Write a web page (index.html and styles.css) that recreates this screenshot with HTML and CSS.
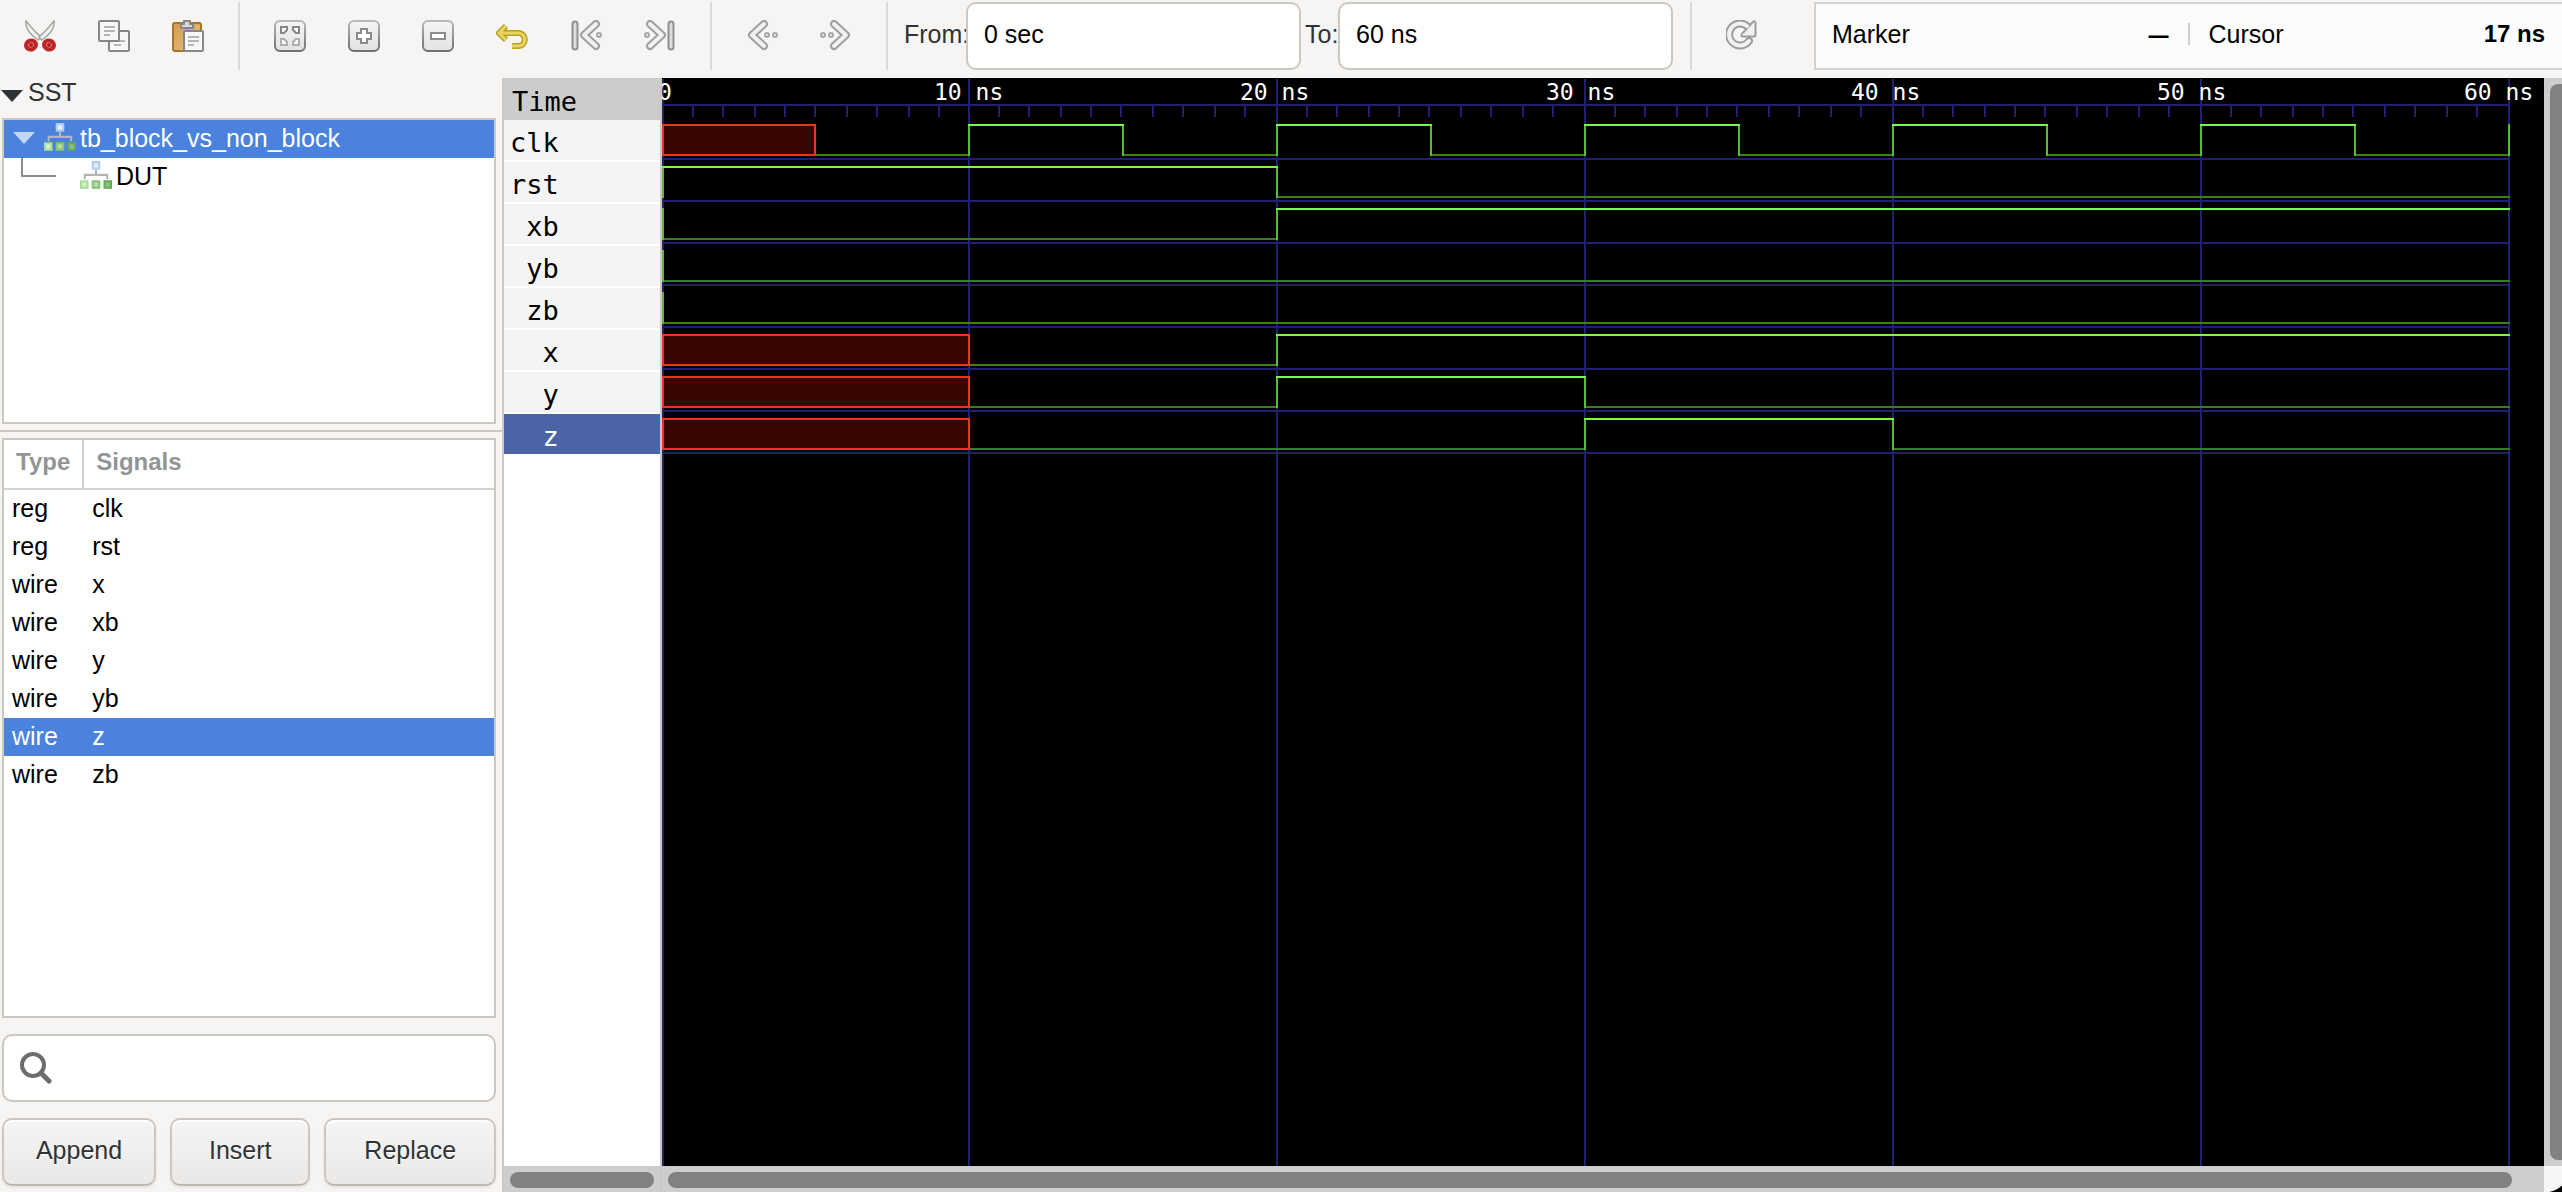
FILE: index.html
```html
<!DOCTYPE html>
<html lang="en">
<head>
<meta charset="utf-8">
<title>Waveform viewer</title>
<link rel="stylesheet" href="styles.css">
</head>
<body>
<svg class="defs" width="0" height="0" aria-hidden="true">
  <defs>
    <linearGradient id="plate" x1="0" y1="0" x2="0" y2="1">
      <stop offset="0" stop-color="#f4f5f4"/><stop offset="1" stop-color="#e2e3e1"/>
    </linearGradient>
    <linearGradient id="plate-edge" x1="0" y1="0" x2="0" y2="1">
      <stop offset="0" stop-color="#b4bab5"/><stop offset="1" stop-color="#6f7270"/>
    </linearGradient>
    <linearGradient id="board" x1="0" y1="0" x2="1" y2="1">
      <stop offset="0" stop-color="#d29d4c"/><stop offset="1" stop-color="#e6c184"/>
    </linearGradient>
    <symbol id="module" viewBox="0 0 30 28">
      <path d="M15 8v5M4.500 17v-4h21v4" fill="none" stroke="#b5b5b5" stroke-width="2"/>
      <rect x="12" y="1" width="6" height="6" fill="#e3eefc" stroke="#b0cdf2" stroke-width="2"/>
      <rect x="1" y="19" width="6" height="6" fill="#d3f0c8" stroke="#abdc9c" stroke-width="2"/>
      <rect x="12" y="19" width="6" height="6" fill="#b4deA6" stroke="#88c476" stroke-width="2"/>
      <rect x="23" y="19" width="6" height="6" fill="#8cc47b" stroke="#68a957" stroke-width="2"/>
    </symbol>
    <path id="chevron" d="M26 4 14 15l12 11"/>
  </defs>
</svg>

<header class="toolbar">
  <div class="group">
    <button class="tool" type="button" aria-label="Cut">
      <svg width="32" height="32" viewBox="0 0 32 32">
        <path d="M2 1c-1 6 2 12 12 19l3-3C11 12 6 6 2 1z" fill="#f4f5f3" stroke="#a2a6a1" stroke-width="1.500"/>
        <path d="M30 1c1 6-2 12-12 19l-3-3C21 12 26 6 30 1z" fill="#f4f5f3" stroke="#a2a6a1" stroke-width="1.500"/>
        <ellipse cx="7" cy="25" rx="5" ry="4.500" transform="rotate(-25 7 25)" fill="#d98080" stroke="#bd2626" stroke-width="4"/>
        <ellipse cx="25" cy="25" rx="5" ry="4.500" transform="rotate(25 25 25)" fill="#d98080" stroke="#bd2626" stroke-width="4"/>
        <circle cx="7" cy="25" r="2" fill="#b52020"/><circle cx="25" cy="25" r="2" fill="#b52020"/>
      </svg>
    </button>
    <button class="tool" type="button" aria-label="Copy">
      <svg width="32" height="32" viewBox="0 0 32 32">
        <rect x="11" y="11" width="20" height="20" rx="1" fill="#f7f7f6" stroke="#848885" stroke-width="2"/>
        <path d="M16 21h11M16 25h7" stroke="#b4b6b4" stroke-width="2"/>
        <rect x="1" y="1" width="20" height="20" rx="1" fill="#f7f7f6" stroke="#848885" stroke-width="2"/>
        <path d="M6 7h11M6 11h11M6 15h6" stroke="#b4b6b4" stroke-width="2"/>
      </svg>
    </button>
    <button class="tool" type="button" aria-label="Paste">
      <svg width="32" height="32" viewBox="0 0 32 32">
        <rect x="1" y="3" width="28" height="28" rx="2" fill="url(#board)" stroke="#aa7325" stroke-width="2"/>
        <path d="M12 1h6v3h3v4H9V4h3z" fill="#d8dad7" stroke="#858985" stroke-width="2" stroke-linejoin="round"/>
        <rect x="12" y="11" width="19" height="20" rx="1" fill="#f7f7f6" stroke="#848885" stroke-width="2"/>
        <path d="M16 17h11M16 21h11M16 25h6" stroke="#b4b6b4" stroke-width="2"/>
      </svg>
    </button>
  </div>
  <div class="group">
    <button class="tool" type="button" aria-label="Zoom fit">
      <svg width="32" height="32" viewBox="0 0 32 32">
        <rect x="1" y="1" width="30" height="30" rx="5" fill="url(#plate)" stroke="url(#plate-edge)" stroke-width="2"/>
        <g fill="#fff" stroke="#858785" stroke-width="2">
          <path d="M7 7h6v3l-3 3H7z"/><path d="M25 7h-6v3l3 3h3z"/>
          <path stroke="#adafad" d="M7 25h6v-3l-3-3H7z"/><path stroke="#adafad" d="M25 25h-6v-3l3-3h3z"/>
        </g>
      </svg>
    </button>
    <button class="tool" type="button" aria-label="Zoom in">
      <svg width="32" height="32" viewBox="0 0 32 32">
        <rect x="1" y="1" width="30" height="30" rx="5" fill="url(#plate)" stroke="url(#plate-edge)" stroke-width="2"/>
        <path d="M13 9h6v4h4v6h-4v4h-6v-4H9v-6h4z" fill="#fff" stroke="#8b8d8b" stroke-width="2"/>
      </svg>
    </button>
    <button class="tool" type="button" aria-label="Zoom out">
      <svg width="32" height="32" viewBox="0 0 32 32">
        <rect x="1" y="1" width="30" height="30" rx="5" fill="url(#plate)" stroke="url(#plate-edge)" stroke-width="2"/>
        <rect x="9" y="13" width="14" height="6" fill="#fff" stroke="#8b8d8b" stroke-width="2"/>
      </svg>
    </button>
    <button class="tool" type="button" aria-label="Undo zoom">
      <svg width="32" height="32" viewBox="0 0 32 32" fill="none" stroke-linejoin="round">
        <path d="M10 6 3 13l7 7M4 13h18c9 0 9 13 0 13h-6" stroke="#b99f22" stroke-width="6"/>
        <path d="M10 6 3 13l7 7M4 13h18c9 0 9 13 0 13h-6" stroke="#e8d661" stroke-width="3"/>
      </svg>
    </button>
    <button class="tool" type="button" aria-label="Zoom to start">
      <svg width="32" height="32" viewBox="0 0 32 32" fill="none" stroke-linecap="round" stroke-linejoin="round">
        <g stroke="#9fa19f" stroke-width="8"><use href="#chevron"/></g>
        <path d="M5 4v23" stroke="#8f918f" stroke-width="7"/>
        <g stroke="#f1f1f0" stroke-width="4"><use href="#chevron"/></g>
        <path d="M5 4v23" stroke="#dcdddc" stroke-width="3"/>
        <circle cx="29" cy="15" r="2" stroke="#a6a8a6" stroke-width="2"/>
      </svg>
    </button>
    <button class="tool" type="button" aria-label="Zoom to end">
      <svg width="32" height="32" viewBox="0 0 32 32" fill="none" stroke-linecap="round" stroke-linejoin="round">
        <g transform="matrix(-1 0 0 1 32 0)">
          <g stroke="#9fa19f" stroke-width="8"><use href="#chevron"/></g>
          <path d="M5 4v23" stroke="#8f918f" stroke-width="7"/>
          <g stroke="#f1f1f0" stroke-width="4"><use href="#chevron"/></g>
          <path d="M5 4v23" stroke="#dcdddc" stroke-width="3"/>
          <circle cx="29" cy="15" r="2" stroke="#a6a8a6" stroke-width="2"/>
        </g>
      </svg>
    </button>
  </div>
  <div class="group">
    <button class="tool" type="button" aria-label="Previous edge">
      <svg width="32" height="32" viewBox="0 0 32 32" fill="none" stroke-linecap="round" stroke-linejoin="round">
        <use href="#chevron" x="-8" stroke="#9fa19f" stroke-width="8"/>
        <use href="#chevron" x="-8" stroke="#f1f1f0" stroke-width="4"/>
        <g stroke="#a6a8a6" stroke-width="2"><circle cx="21" cy="15" r="2"/><circle cx="29" cy="15" r="2"/></g>
      </svg>
    </button>
    <button class="tool" type="button" aria-label="Next edge">
      <svg width="32" height="32" viewBox="0 0 32 32" fill="none" stroke-linecap="round" stroke-linejoin="round">
        <g transform="matrix(-1 0 0 1 32 0)">
          <use href="#chevron" x="-8" stroke="#9fa19f" stroke-width="8"/>
          <use href="#chevron" x="-8" stroke="#f1f1f0" stroke-width="4"/>
          <g stroke="#a6a8a6" stroke-width="2"><circle cx="21" cy="15" r="2"/><circle cx="29" cy="15" r="2"/></g>
        </g>
      </svg>
    </button>
  </div>
  <div class="group range">
    <label for="from">From:</label>
    <input class="entry" id="from" type="text" value="0 sec">
    <label class="to" for="to">To:</label>
    <input class="entry" id="to" type="text" value="60 ns">
  </div>
  <div class="group">
    <button class="tool" type="button" aria-label="Reload">
      <svg width="32" height="32" viewBox="0 0 32 32" fill="none" stroke-linecap="round" stroke-linejoin="round">
        <path d="M23 21A11 11 0 1 1 21 6" stroke="#9b9d9b" stroke-width="8"/>
        <path d="M28 3v12H17z" fill="#f1f1f0" stroke="#9b9d9b" stroke-width="5"/>
        <path d="M23 21A11 11 0 1 1 21 6" stroke="#f1f1f0" stroke-width="4"/>
        <path d="M28 3v12H17z" fill="#f1f1f0" stroke="#f1f1f0"/>
      </svg>
    </button>
  </div>
  <div class="readout">
    <div class="field"><span>Marker</span><span class="dash">–</span></div>
    <span class="bar"></span>
    <div class="field"><span>Cursor</span><strong>17 ns</strong></div>
  </div>
</header>

<main class="work">
  <aside class="side">
    <h2 class="expander">
      <svg width="24" height="14" viewBox="0 0 24 14"><path d="M1 1h22L12 13z" fill="#2e3436"/></svg>SST
    </h2>
    <ul class="tree">
      <li class="node selected">
        <svg width="24" height="14" viewBox="0 0 24 14"><path d="M1 1h22L12 13z" fill="#c3d7f5"/></svg>
        <svg class="module" width="32" height="30"><use href="#module"/></svg>tb_block_vs_non_block
      </li>
      <li class="node child">
        <svg class="branch" width="36" height="38"><path d="M1 1v18h34" fill="none" stroke="#8e8e8e" stroke-width="2"/></svg>
        <svg class="module" width="32" height="30"><use href="#module"/></svg>DUT
      </li>
    </ul>
    <div class="sash"></div>
    <div class="signals">
      <table>
        <thead><tr><th class="type" scope="col">Type</th><th scope="col">Signals</th></tr></thead>
        <tbody>
          <tr><td>reg</td><td>clk</td></tr>
          <tr><td>reg</td><td>rst</td></tr>
          <tr><td>wire</td><td>x</td></tr>
          <tr><td>wire</td><td>xb</td></tr>
          <tr><td>wire</td><td>y</td></tr>
          <tr><td>wire</td><td>yb</td></tr>
          <tr class="selected"><td>wire</td><td>z</td></tr>
          <tr><td>wire</td><td>zb</td></tr>
        </tbody>
      </table>
    </div>
    <label class="search">
      <svg width="32" height="32" viewBox="0 0 32 32" fill="none" stroke="#6a6d6b" stroke-width="4"><circle cx="13" cy="13" r="11"/><path d="m21 21 8 8" stroke-width="5" stroke-linecap="round"/></svg>
      <input type="text" aria-label="Filter signals">
    </label>
    <div class="actions">
      <button class="action" type="button">Append</button>
      <button class="action narrow" type="button">Insert</button>
      <button class="action wide" type="button">Replace</button>
    </div>
  </aside>

  <section class="names">
    <h2 class="time">Time</h2>
    <ul class="traces">
      <li>clk</li>
      <li>rst</li>
      <li> xb</li>
      <li> yb</li>
      <li> zb</li>
      <li>  x</li>
      <li>  y</li>
      <li class="current">  z</li>
    </ul>
    <div class="hscroll"><span class="thumb"></span></div>
  </section>

  <section class="waves">
    <svg class="canvas" role="img" aria-label="Waveforms from 0 to 60 ns">
      <defs>
        <path id="ticks" d="M30 28v11M60 28v11M92 28v11M122 28v11M152 28v11M184 28v11M214 28v11M246 28v11M276 28v11"/>
        <path id="row-line" d="M0 81h1848"/>
        <path id="major" d="M0 1v2000"/>
        <path id="clk-high" d="M-1 47h156"/>
        <path id="clk-low" d="M153 77h154"/>
        <path id="clk-edge" d="M0 46v32M154 46v32"/>
        <path id="start-edge" d="M1 88v32"/>
      </defs>
      <g class="grid">
        <path d="M0 27h1847"/>
        <use href="#ticks" x="1"/><use href="#ticks" x="307"/><use href="#ticks" x="615"/>
        <use href="#ticks" x="923"/><use href="#ticks" x="1231"/><use href="#ticks" x="1539"/>
        <use href="#row-line"/><use href="#row-line" y="42"/><use href="#row-line" y="84"/><use href="#row-line" y="126"/>
        <use href="#row-line" y="168"/><use href="#row-line" y="210"/><use href="#row-line" y="252"/><use href="#row-line" y="294"/>
        <use href="#major" x="1"/><use href="#major" x="307"/><use href="#major" x="615"/><use href="#major" x="923"/>
        <use href="#major" x="1231"/><use href="#major" x="1539"/><use href="#major" x="1847"/>
      </g>
      <g class="low">
        <path d="M153 77h154"/>
        <use href="#clk-low" x="308"/><use href="#clk-low" x="616"/><use href="#clk-low" x="924"/><use href="#clk-low" x="1232"/><use href="#clk-low" x="1540"/>
        <path d="M615 119h1233M0 161h615M0 203h1848M0 245h1848M307 287h308M307 329h308M923 329h925M307 371h616M1231 371h617"/>
      </g>
      <g class="edge">
        <use href="#clk-edge" x="307"/><use href="#clk-edge" x="615"/><use href="#clk-edge" x="923"/><use href="#clk-edge" x="1231"/><use href="#clk-edge" x="1539"/>
        <path d="M1847 46v32M615 88v32M615 130v32M615 256v32M615 298v32M923 298v32M923 340v32M1231 340v32"/>
        <use href="#start-edge"/><use href="#start-edge" y="42"/><use href="#start-edge" y="84"/><use href="#start-edge" y="126"/>
      </g>
      <g class="high">
        <use href="#clk-high" x="307"/><use href="#clk-high" x="615"/><use href="#clk-high" x="923"/><use href="#clk-high" x="1231"/><use href="#clk-high" x="1539"/>
        <path d="M0 89h616M614 131h1234M614 257h1234M614 299h310M922 341h310"/>
      </g>
      <g class="unknown">
        <rect x="1" y="47" width="152" height="30"/>
        <rect x="1" y="257" width="306" height="30"/>
        <rect x="1" y="299" width="306" height="30"/>
        <rect x="1" y="341" width="306" height="30"/>
      </g>
      <g class="scale">
        <text x="-4" y="22">0</text>
        <text x="272" y="22">10 ns</text>
        <text x="578" y="22">20 ns</text>
        <text x="884" y="22">30 ns</text>
        <text x="1189" y="22">40 ns</text>
        <text x="1495" y="22">50 ns</text>
        <text x="1802" y="22">60 ns</text>
      </g>
    </svg>
    <div class="hscroll main"><span class="thumb"></span></div>
  </section>

  <div class="vbar">
    <div class="vscroll"><span class="vthumb"></span></div>
    <div class="corner"></div>
  </div>
</main>
</body>
</html>
```

FILE: styles.css
```css
* {
  box-sizing: border-box;
}

body {
  margin: 0;
  height: 100vh;
  display: flex;
  flex-direction: column;
  overflow: hidden;
  background: #f6f5f4;
  color: #000;
  font: 25px/30px "Liberation Sans", Arial, sans-serif;
}

.defs {
  position: absolute;
}

h2,
ul {
  margin: 0;
  padding: 0;
  list-style: none;
  font-weight: normal;
}

svg {
  display: block;
  flex: none;
}

/* Toolbar */

.toolbar {
  display: flex;
  flex: none;
  height: 78px;
  padding: 2px 0 8px 3px;
}

.group {
  display: flex;
  flex: none;
}

.group + .group::before {
  content: "";
  width: 2px;
  margin: 0 13px;
  background: #dcdbd9;
}

.tool {
  display: flex;
  align-items: center;
  justify-content: center;
  width: 74px;
  padding: 0;
  border: 0;
  background: none;
}

.range {
  padding-right: 4px;
}

.range label {
  align-self: center;
  width: 65px;
  padding: 0 0 4px 3px;
  color: #2e3436;
}

.range .to {
  width: 37px;
  padding-left: 4px;
}

.entry {
  width: 335px;
  padding: 0 16px 4px;
  border: 2px solid #cdc7c2;
  border-radius: 10px;
  background: #fff;
  color: #000;
  font: inherit;
}

.readout {
  display: flex;
  flex: 1;
  align-items: center;
  margin-left: 35px;
  padding: 0 17px 4px 16px;
  border: 2px solid #d5d0cc;
  border-right: 0;
  background: #fcfcfc;
}

.field {
  display: flex;
  flex: 1;
  align-items: center;
  justify-content: space-between;
}

.dash {
  font-size: 36px;
}

.bar {
  width: 2px;
  height: 22px;
  margin: 0 19px;
  background: #d0cfcd;
}

strong {
  font-size: 24px;
}

/* Left side: module tree and signal list */

.work {
  display: flex;
  flex: 1;
  min-height: 0;
}

.side {
  display: flex;
  flex: none;
  flex-direction: column;
  width: 504px;
  padding-bottom: 6px;
  border-right: 2px solid #cdc7c2;
}

.expander {
  display: flex;
  align-items: center;
  gap: 4px;
  height: 40px;
  padding-bottom: 12px;
  color: #2e3436;
  font-size: 25px;
}

.expander svg {
  margin-top: 8px;
}

.tree {
  flex: none;
  height: 306px;
  margin: 0 6px 0 2px;
  border: 2px solid #cdc7c2;
  background: #fff;
}

.node {
  display: flex;
  align-items: center;
  height: 38px;
  padding: 0 0 2px 8px;
}

.node .module {
  margin: 0 4px 0 8px;
}

.child {
  padding-left: 17px;
}

.child .module {
  margin-left: 23px;
}

.selected {
  background: #4a82dd;
  color: #fff;
}

.sash {
  flex: none;
  height: 2px;
  margin: 6px 0;
  background: #cdc7c2;
}

.signals {
  flex: 1;
  min-height: 0;
  margin: 0 6px 0 2px;
  border: 2px solid #cdc7c2;
  background: #fff;
}

table {
  width: 100%;
  border-collapse: separate;
  border-spacing: 0;
}

th {
  height: 50px;
  padding: 0 12px 4px;
  border-bottom: 2px solid #d5d0cc;
  color: #929595;
  font-size: 24px;
  text-align: left;
}

.type {
  width: 80px;
  border-right: 2px solid #d5d0cc;
}

td {
  height: 38px;
  padding: 0 8px 2px;
}

.search {
  display: flex;
  flex: none;
  align-items: center;
  height: 68px;
  margin: 16px 6px 16px 2px;
  padding: 0 16px;
  border: 2px solid #cdc7c2;
  border-radius: 10px;
  background: #fff;
}

.search input {
  flex: 1;
  min-width: 0;
  border: 0;
  background: none;
  font: inherit;
}

.actions {
  display: flex;
  flex: none;
  gap: 14px;
  margin: 0 6px 0 2px;
}

.action {
  flex: 154;
  height: 68px;
  padding: 0 0 4px;
  border: 2px solid #cdc7c2;
  border-bottom-color: #bfb8b1;
  border-radius: 10px;
  background: linear-gradient(#f6f5f3, #eae8e6);
  box-shadow: inset 0 2px #fff, 0 2px 3px #e6e4e1;
  color: #2e3436;
  font: inherit;
  text-shadow: 0 1px #fff;
}

.narrow {
  flex: 140;
}

.wide {
  flex: 172;
}

/* Trace names */

.names {
  display: flex;
  flex: none;
  flex-direction: column;
  width: 158px;
  border-right: 2px solid #cdc7c2;
  background: #fff;
  font: 27px/40px "DejaVu Sans Mono", monospace;
}

.time {
  height: 42px;
  padding: 4px 8px 0;
  background: #cccccc;
  font-size: 27px;
}

.traces {
  flex: 1;
}

.traces li {
  height: 40px;
  margin-bottom: 2px;
  padding: 3px 6px 0;
  background: #f4f4f4;
  white-space: pre;
}

.traces .current {
  background: #4a64a7;
  color: #fff;
}

/* Waveform canvas */

.waves {
  display: flex;
  flex: 1;
  flex-direction: column;
  min-width: 0;
  background: #000;
}

.canvas {
  flex: 1;
  width: 100%;
  min-height: 0;
  fill: none;
  stroke-width: 2px;
  shape-rendering: crispEdges;
}

.grid {
  stroke: #20206f;
}

.low {
  stroke: #387f20;
}

.edge {
  stroke: #55bd34;
}

.high {
  stroke: #76fb4c;
}

.unknown {
  fill: #380603;
  stroke: #ee3323;
}

.scale {
  fill: #fff;
  font: 23px "DejaVu Sans Mono", monospace;
}

/* Scrollbars */

.hscroll {
  flex: none;
  height: 26px;
  padding: 6px 6px 4px;
  background: #cdcdcd;
}

.hscroll.main {
  padding-right: 32px;
}

.thumb {
  display: block;
  height: 16px;
  border-radius: 8px;
  background: #808182;
}

.vbar {
  display: flex;
  flex: none;
  flex-direction: column;
  width: 18px;
}

.vscroll {
  display: flex;
  flex: 1;
  padding: 6px 0 6px 6px;
  background: #cdcdcd;
}

.vthumb {
  flex: 1;
  border-radius: 8px 0 0 8px;
  background: #808182;
}

.corner {
  height: 26px;
  background: radial-gradient(circle at 0 0, #f6f5f4 26px, #000 27px);
}
```
